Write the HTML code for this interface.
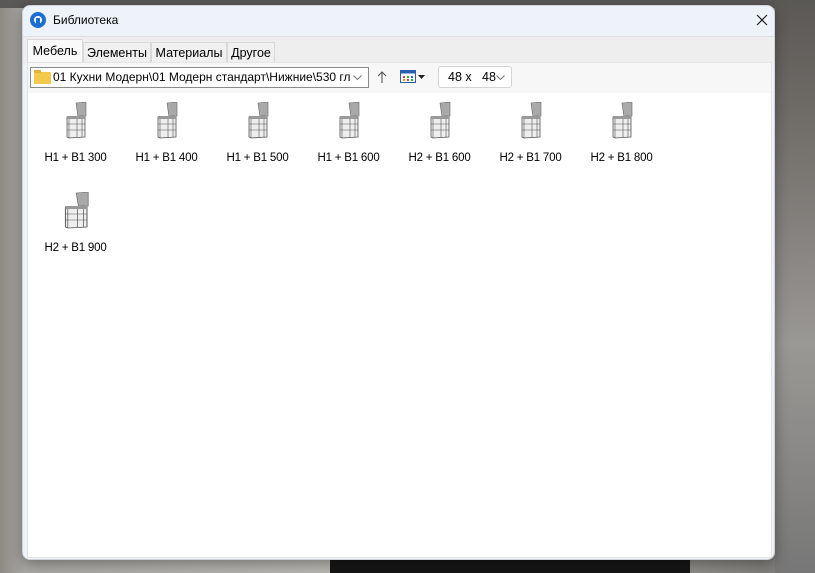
<!DOCTYPE html>
<html><head><meta charset="utf-8"><style>
body{margin:0;width:815px;height:573px;overflow:hidden;font-family:"Segoe UI","Liberation Sans",sans-serif;font-size:12px;color:#000;
background:linear-gradient(90deg,#8d8a84 0,#a9a8a4 3%,#bdbcb8 50%,#7a7874 100%);position:relative}
.bgtop{position:absolute;left:0;top:0;width:815px;height:8px;background:#5a5856}
.bgbot{position:absolute;left:330px;top:560px;width:360px;height:13px;background:#161616}
.bgright{position:absolute;left:775px;top:0;width:40px;height:573px;background:linear-gradient(180deg,#5b5955 0,#6f6c68 20%,#9a9894 60%,#777 100%)}
.win{position:absolute;left:22px;top:5px;width:753px;height:555px;background:#eef2f9;border-radius:8px;border:1px solid #cfd2d8;box-sizing:border-box;overflow:hidden;box-shadow:0 4px 14px rgba(0,0,0,.35)}
.title{position:absolute;left:30px;top:7px;font-size:12px}
.logo{position:absolute;left:7px;top:6px;width:16px;height:16px;border-radius:50%;background:#1a6fd0}
.logo:after{content:"";position:absolute;left:4px;top:4px;width:8px;height:8px;border-radius:50%;background:#fff}
.logo:before{content:"";position:absolute;left:6px;top:6px;width:4px;height:7px;background:#1a6fd0;z-index:2}
.tabs{position:absolute;left:0;top:30px;width:753px;height:26px;background:#eeeeee;border-top:1px solid #dde0e5}
.tab{position:absolute;top:5px;height:21px;line-height:20px;border:1px solid #d9d9d9;border-bottom:none;background:#f0f0f0;box-sizing:border-box;text-align:center;font-size:12.5px}
.tab.a{top:2px;height:24px;background:#f9f9f9;line-height:22px}
.panel{position:absolute;left:4px;top:56px;width:745px;height:496px;background:#f7f7f7;border:1px solid #e4e4e4;box-sizing:border-box}
.combo{position:absolute;left:2px;top:4px;width:339px;height:21px;background:#fff;border:1px solid #8a8a8a;box-sizing:border-box;font-size:12px;line-height:19px;padding-left:22px;white-space:nowrap;overflow:hidden}
.fold{position:absolute;left:3px;top:4px;width:17px;height:12px;background:#f2c94c;border-radius:1px}
.fold:before{content:"";position:absolute;left:0;top:-2px;width:7px;height:3px;background:#e6b33a}
.size{position:absolute;left:410px;top:3px;width:74px;height:22px;background:#fff;border:1px solid #d5d5d5;border-radius:3px;box-sizing:border-box;font-size:12.5px;line-height:20px;padding-left:9px}
.content{position:absolute;left:0;top:30px;width:743px;height:464px;background:#fff}
.it{position:absolute;width:91px;text-align:center;font-size:11.5px;letter-spacing:-0.2px}
.it svg{display:block;margin:0 auto 13px}
</style></head><body>
<div class="bgtop"></div><div class="bgright"></div><div class="bgbot"></div>
<div class="win">
<div class="logo"></div><div class="title">Библиотека</div>
<svg style="position:absolute;left:733px;top:8px" width="12" height="12"><path d="M1 1L11 11M11 1L1 11" stroke="#222" stroke-width="1.2"/></svg>
<div class="tabs">
<div class="tab a" style="left:4px;width:56px">Мебель</div>
<div class="tab" style="left:60px;width:68px">Элементы</div>
<div class="tab" style="left:128px;width:76px">Материалы</div>
<div class="tab" style="left:204px;width:48px">Другое</div>
</div>
<div class="panel">
<div class="combo"><div class="fold"></div><span style="display:inline-block;width:300px;overflow:hidden">01 Кухни Модерн\01 Модерн стандарт\Нижние\530 гл</span>
<svg style="position:absolute;right:6px;top:7px" width="9" height="6"><path d="M0.5 0.5L4.5 4.5L8.5 0.5" fill="none" stroke="#777"/></svg></div>
<svg style="position:absolute;left:349px;top:8px" width="10" height="12"><path d="M5 1V12M1 5L5 1L9 5" fill="none" stroke="#555" stroke-width="1.1"/></svg>
<svg style="position:absolute;left:372px;top:7px" width="26" height="14"><rect x="0.5" y="0.5" width="15" height="12" fill="#fff" stroke="#2a5fb0"/><rect x="0.5" y="0.5" width="15" height="3" fill="#2a5fb0"/><g fill="#c44"><rect x="3" y="6" width="2" height="2"/><rect x="7" y="6" width="2" height="2" fill="#3a3"/><rect x="11" y="6" width="2" height="2" fill="#36c"/><rect x="3" y="9" width="2" height="2" fill="#e90"/><rect x="7" y="9" width="2" height="2"/><rect x="11" y="9" width="2" height="2" fill="#3a3"/></g><path d="M18 5h7l-3.5 4z" fill="#222"/></svg>
<div class="size">48 x &nbsp; 48<svg style="position:absolute;right:6px;top:8px" width="9" height="6"><path d="M0.5 0.5L4.5 4.5L8.5 0.5" fill="none" stroke="#777"/></svg></div>
<div class="content">
<svg width="0" height="0" style="position:absolute"><defs><g id="cab"><path d="M11 1 L21 0 L21 14 L13 15 Z" fill="#a9a9a9" stroke="#666" stroke-width=".6"/><path d="M2 15 L18 14 L20 15 L20 35 L4 36 L2 35 Z" fill="#eee" stroke="#555" stroke-width=".8"/><path d="M4 16 L4 36 M2 22 L20 22 M2 28 L20 28 M12 16 L12 35 M17 16 L17 35" fill="none" stroke="#555" stroke-width=".6"/><rect x="2" y="14" width="18" height="3" fill="#999"/></g></defs></svg>
<div class="it" style="left:2px;top:9px"><svg width="22" height="37"><use href="#cab"/></svg>H1 + B1 300</div>
<div class="it" style="left:93px;top:9px"><svg width="22" height="37"><use href="#cab"/></svg>H1 + B1 400</div>
<div class="it" style="left:184px;top:9px"><svg width="22" height="37"><use href="#cab"/></svg>H1 + B1 500</div>
<div class="it" style="left:275px;top:9px"><svg width="22" height="37"><use href="#cab"/></svg>H1 + B1 600</div>
<div class="it" style="left:366px;top:9px"><svg width="22" height="37"><use href="#cab"/></svg>H2 + B1 600</div>
<div class="it" style="left:457px;top:9px"><svg width="22" height="37"><use href="#cab"/></svg>H2 + B1 700</div>
<div class="it" style="left:548px;top:9px"><svg width="22" height="37"><use href="#cab"/></svg>H2 + B1 800</div>
<div class="it" style="left:2px;top:99px"><svg width="26" height="37"><use href="#cab" transform="scale(1.2,1)"/></svg>H2 + B1 900</div>
</div>
</div>
</div>
</body></html>
